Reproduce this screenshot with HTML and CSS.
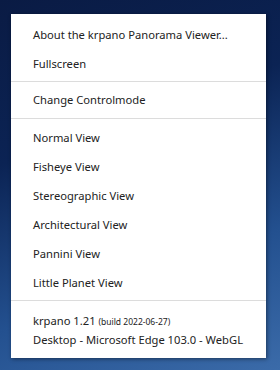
FILE: index.html
```html
<!DOCTYPE html>
<html lang="en">
<head>
    <meta charset="UTF-8">
    <title>krpano context menu</title>
    <link rel="stylesheet" href="styles.css">
</head>
<body>
    <div class="menu">
        <div class="item">About the krpano Panorama Viewer...</div>
        <div class="item">Fullscreen</div>
        <div class="sep"></div>
        <div class="item">Change Controlmode</div>
        <div class="sep sep-wide"></div>
        <div class="item">Normal View</div>
        <div class="item">Fisheye View</div>
        <div class="item">Stereographic View</div>
        <div class="item">Architectural View</div>
        <div class="item">Pannini View</div>
        <div class="item">Little Planet View</div>
        <div class="sep"></div>
        <div class="info">
            <div>krpano 1.21 <span class="small">(build 2022-06-27)</span></div>
            <div>Desktop - Microsoft Edge 103.0 - WebGL</div>
        </div>
    </div>
</body>
</html>
```

FILE: styles.css
```css
html, body { height: 100%; }
body {
    margin: 0;
    padding: 14px 14px 14px 11px;
    box-sizing: border-box;
    font-family: "Noto Sans", sans-serif;
    background: linear-gradient(160deg, #0a1b44 0%, #0b2354 35%, #23508f 70%, #3b6ba9 100%);
}
.menu {
    width: 255px;
    background: #fff;
    padding: 6px 0 6px;
    box-shadow: 1px 1px 4px rgba(0, 0, 0, 0.45);
    color: #222;
    font-size: 11.2px;
}
.item { height: 29px; line-height: 29px; padding-left: 22px; white-space: nowrap; }
.sep { height: 1px; background: #dcdcdc; margin: 3px 0; }
.sep-wide { margin: 4px 0 4px; }
.info { padding: 8px 0 3px 22px; line-height: 18px; white-space: nowrap; }
.small { font-size: 8.5px; }
```
